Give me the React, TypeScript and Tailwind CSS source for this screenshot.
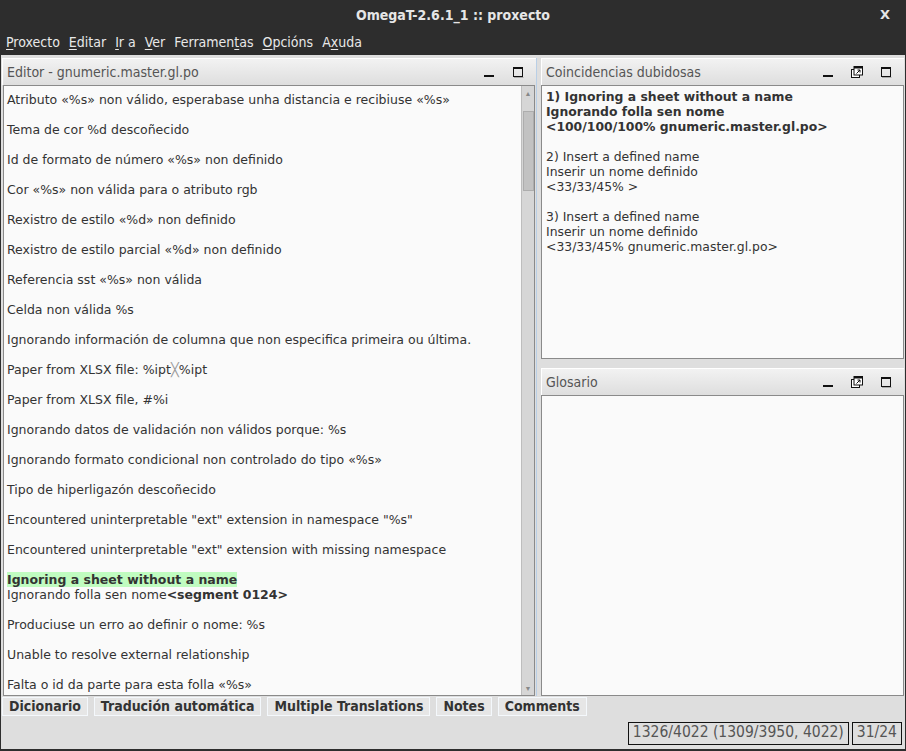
import React from "react";

const cond = "font-['DejaVu_Sans_Condensed','DejaVu_Sans',sans-serif]";
const body = "font-['DejaVu_Sans',sans-serif]";

const entries = [
  "Atributo «%s» non válido, esperabase unha distancia e recibiuse «%s»",
  "Tema de cor %d descoñecido",
  "Id de formato de número «%s» non definido",
  "Cor «%s» non válida para o atributo rgb",
  "Rexistro de estilo «%d» non definido",
  "Rexistro de estilo parcial «%d» non definido",
  "Referencia sst «%s» non válida",
  "Celda non válida %s",
  "Ignorando información de columna que non especifica primeira ou última.",
  "XLSX1",
  "Paper from XLSX file, #%i",
  "Ignorando datos de validación non válidos porque: %s",
  "Ignorando formato condicional non controlado do tipo «%s»",
  "Tipo de hiperligazón descoñecido",
  'Encountered uninterpretable "ext" extension in namespace "%s"',
  'Encountered uninterpretable "ext" extension with missing namespace',
];

const after = [
  "Produciuse un erro ao definir o nome: %s",
  "Unable to resolve external relationship",
  "Falta o id da parte para esta folla «%s»",
];

const MinIcon = () => (
  <svg width="12" height="12" viewBox="0 0 12 12">
    <rect x="1" y="9" width="10" height="2" fill="#111" />
  </svg>
);

const MaxIcon = () => (
  <svg width="12" height="12" viewBox="0 0 12 12">
    <rect x="1.5" y="1.5" width="9" height="9" fill="none" stroke="#111" strokeWidth="1" />
    <rect x="1" y="1" width="10" height="2" fill="#111" />
    <line x1="2" y1="11.5" x2="11.5" y2="11.5" stroke="#aaa" />
  </svg>
);

const FloatIcon = () => (
  <svg width="12" height="12" viewBox="0 0 12 12">
    <rect x="0.5" y="3.5" width="8" height="8" fill="#fff" stroke="#111" />
    <rect x="3" y="0.5" width="8.5" height="8.5" fill="#fff" stroke="#111" />
    <rect x="3" y="0.5" width="8.5" height="2" fill="#111" />
    <path d="M5.5 7.5 L9 4 M6.5 4 H9 V6.5" stroke="#111" fill="none" />
  </svg>
);

function PanelHeader({ title, float }: { title: string; float?: boolean }) {
  return (
    <div className="h-[27px] flex items-center pl-[4px] pr-[12px] border-t border-l border-white bg-gradient-to-b from-[#f2f2f2] to-[#dedede]">
      <span className={`${cond} text-[14px] text-[#555] flex-1`}>{title}</span>
      <div className="flex items-center gap-[17px]">
        <MinIcon />
        {float && <FloatIcon />}
        <MaxIcon />
      </div>
    </div>
  );
}

function U({ t, i }: { t: string; i: number }) {
  return (
    <span>
      {t.slice(0, i)}
      <span className="underline underline-offset-2">{t[i]}</span>
      {t.slice(i + 1)}
    </span>
  );
}

export default function App() {
  const menu: [string, number][] = [
    ["Proxecto", 0],
    ["Editar", 0],
    ["Ir a", 0],
    ["Ver", 0],
    ["Ferramentas", 8],
    ["Opcións", 0],
    ["Axuda", 1],
  ];
  const tabs = ["Dicionario", "Tradución automática", "Multiple Translations", "Notes", "Comments"];

  return (
    <div className="w-[906px] h-[751px] bg-[#2d2d2d] flex flex-col overflow-hidden">
      <div className="h-[30px] flex items-center pl-[14px] pr-[16px]">
        <div className="w-[12px]" />
        <div className={`${cond} flex-1 text-center text-[14px] font-bold text-[#e6e6e6]`}>
          OmegaT-2.6.1_1 :: proxecto
        </div>
        <span className={`${body} text-[13px] font-bold text-[#e6e6e6]`}>X</span>
      </div>
      <div className={`${cond} h-[25px] flex items-center gap-[9px] px-[6px] text-[14px] text-[#e8e8e8]`}>
        {menu.map(([t, i]) => (
          <U key={t} t={t} i={i} />
        ))}
      </div>
      <div className="flex-1 bg-[#dedede] mx-[1px] mb-[2px] flex flex-col">
        <div className="flex pt-[3px] pl-[1px] gap-[4px] h-[641px]">
          <div className="w-[535px] flex flex-col border-r border-[#b9cfe6]">
            <PanelHeader title="Editor - gnumeric.master.gl.po" />
            <div className="flex-1 flex border border-[#8a8a8a] bg-[#fafafa] ml-[1px] mr-[1px] overflow-hidden">
              <div className={`${body} flex-1 text-[12.5px] leading-[15px] text-[#333] pt-[6px] pl-[3px] overflow-hidden`}>
                {entries.map((e, i) => (
                  <div key={i} className="mb-[15px] whitespace-nowrap">
                    {e === "XLSX1" ? (
                      <>
                        Paper from XLSX file: %ipt<span className="text-[#999] font-light">╳</span>%ipt
                      </>
                    ) : (
                      e
                    )}
                  </div>
                ))}
                <div className="mb-[15px] whitespace-nowrap">
                  <span className="font-bold bg-[#c0fcc0]">Ignoring a sheet without a name</span>
                  <div>
                    Ignorando folla sen nome<span className="font-bold">&lt;segment 0124&gt;</span>
                  </div>
                </div>
                {after.map((e) => (
                  <div key={e} className="mb-[15px] whitespace-nowrap">
                    {e}
                  </div>
                ))}
              </div>
              <div className="w-[13px] bg-[#d6d6d6] border-l border-[#bdbdbd] flex flex-col items-center">
                <span className="text-[7px] text-[#888] h-[25px] leading-[16px]">▲</span>
                <div className="w-[11px] h-[80px] bg-[#c2c2c2] border border-[#adadad]" />
                <div className="flex-1" />
                <span className="text-[7px] text-[#888] leading-[12px]">▼</span>
              </div>
            </div>
          </div>
          <div className="w-[363px] flex flex-col gap-[9px]">
            <div className="h-[301px] flex flex-col">
              <PanelHeader title="Coincidencias dubidosas" float />
              <div className={`${body} flex-1 border border-[#8a8a8a] bg-[#fafafa] text-[12.4px] leading-[15px] text-[#333] pt-[3px] pl-[4px]`}>
                <div className="font-bold">
                  <div>1) Ignoring a sheet without a name</div>
                  <div>Ignorando folla sen nome</div>
                  <div>&lt;100/100/100% gnumeric.master.gl.po&gt;</div>
                </div>
                <div className="h-[15px]" />
                <div>2) Insert a defined name</div>
                <div>Inserir un nome definido</div>
                <div>&lt;33/33/45% &gt;</div>
                <div className="h-[15px]" />
                <div>3) Insert a defined name</div>
                <div>Inserir un nome definido</div>
                <div>&lt;33/33/45% gnumeric.master.gl.po&gt;</div>
              </div>
            </div>
            <div className="flex-1 flex flex-col">
              <PanelHeader title="Glosario" float />
              <div className="flex-1 border border-[#8a8a8a] bg-[#fafafa]" />
            </div>
          </div>
        </div>
        <div className={`${cond} flex gap-[6px] pl-[1px] pt-[1px] h-[21px]`}>
          {tabs.map((t) => (
            <div
              key={t}
              className="h-[19px] px-[6px] flex items-center bg-[#e6e6e6] border border-[#f4f8fc] text-[14px] font-bold text-[#333]"
            >
              {t}
            </div>
          ))}
        </div>
        <div className={`${cond} flex-1 flex justify-end items-center gap-[3px] pr-[3px]`}>
          <div className="h-[23px] px-[4px] flex items-center border border-[#111] text-[15.5px] text-[#555]">
            1326/4022 (1309/3950, 4022)
          </div>
          <div className="h-[23px] px-[4px] flex items-center border border-[#111] text-[15.5px] text-[#555]">
            31/24
          </div>
        </div>
      </div>
    </div>
  );
}
